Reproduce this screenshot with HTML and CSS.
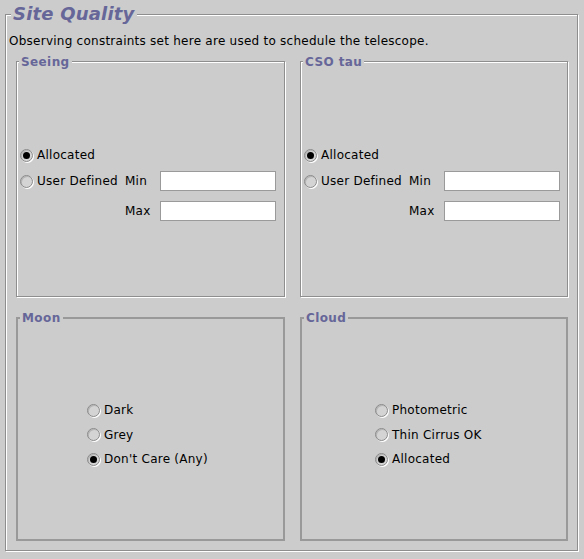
FILE: index.html
```html
<!DOCTYPE html>
<html>
<head>
<meta charset="utf-8">
<link rel="stylesheet" href="styles.css">
</head>
<body>
<div class="panel">
  <span class="panel-title">Site Quality</span>
  <p class="desc">Observing constraints set here are used to schedule the telescope.</p>
  <div class="grid">
    <div class="box etched">
      <span class="box-title">Seeing</span>
      <div class="form">
        <label class="opt"><span class="radio on"></span>Allocated</label>
        <span></span><span></span>
        <label class="opt"><span class="radio"></span>User Defined</label>
        <span class="lbl">Min</span><span class="field"></span>
        <span></span>
        <span class="lbl">Max</span><span class="field"></span>
      </div>
    </div>
    <div class="box etched right">
      <span class="box-title">CSO tau</span>
      <div class="form">
        <label class="opt"><span class="radio on"></span>Allocated</label>
        <span></span><span></span>
        <label class="opt"><span class="radio"></span>User Defined</label>
        <span class="lbl">Min</span><span class="field"></span>
        <span></span>
        <span class="lbl">Max</span><span class="field"></span>
      </div>
    </div>
    <div class="box lined moon">
      <span class="box-title">Moon</span>
      <div class="list">
        <label class="opt"><span class="radio"></span>Dark</label>
        <label class="opt"><span class="radio"></span>Grey</label>
        <label class="opt"><span class="radio on"></span>Don't Care (Any)</label>
      </div>
    </div>
    <div class="box lined cloud">
      <span class="box-title">Cloud</span>
      <div class="list">
        <label class="opt"><span class="radio"></span>Photometric</label>
        <label class="opt"><span class="radio"></span>Thin Cirrus OK</label>
        <label class="opt"><span class="radio on"></span>Allocated</label>
      </div>
    </div>
  </div>
</div>
</body>
</html>
```
FILE: styles.css
```css
html, body {
  margin: 0;
  padding: 0;
  background: #cccccc;
  width: 584px;
  height: 559px;
  overflow: hidden;
  font-family: "DejaVu Sans", sans-serif;
  font-size: 12px;
  letter-spacing: 0.25px;
  color: #000;
}
.panel {
  position: relative;
  box-sizing: border-box;
  margin: 14px 0 0 5px;
  width: 573px;
  height: 537px;
  border: 1px solid #8e8e8e;
  box-shadow: 1px 1px 0 #fff, inset 1px 1px 0 #fff;
  padding: 19px 0 0 3px;
}
.panel-title {
  position: absolute;
  top: -12px;
  left: 5px;
  padding: 0 2px;
  background: #cccccc;
  color: #666699;
  font-size: 18px;
  line-height: 21px;
  font-weight: bold;
  font-style: italic;
  letter-spacing: 0.2px;
}
.desc {
  margin: 0;
  line-height: 14px;
  height: 14px;
  white-space: nowrap;
}
.grid {
  display: grid;
  grid-template-columns: 269px 268px;
  grid-template-rows: 236px 224px;
  column-gap: 15px;
  row-gap: 20px;
  margin: 13px 0 0 7px;
}
.box {
  position: relative;
  box-sizing: border-box;
}
.etched {
  border: 1px solid #8e8e8e;
  box-shadow: 1px 1px 0 #fff, inset 1px 1px 0 #fff;
  padding: 83px 0 0 3px;
}
.lined {
  border: 2px solid #999999;
}
.box-title {
  position: absolute;
  top: -7px;
  left: 2px;
  padding: 0 2px;
  background: #cccccc;
  color: #666699;
  font-weight: bold;
  line-height: 14px;
  letter-spacing: 0.4px;
}
.lined .box-title {
  top: -8px;
  left: 2px;
}
.form {
  display: grid;
  grid-template-columns: 105px 35px 116px;
  grid-template-rows: 20px 26px 30px;
  align-items: end;
}
.lbl {
  line-height: 20px;
  height: 20px;
}
.field {
  box-sizing: border-box;
  width: 116px;
  height: 20px;
  background: #fff;
  border: 1px solid #9a9a9a;
}
.opt {
  display: flex;
  align-items: center;
  white-space: nowrap;
  line-height: 14px;
  height: 20px;
}
.radio {
  flex: none;
  width: 13px;
  height: 13px;
  margin-right: 4px;
  box-sizing: border-box;
  border-radius: 50%;
  border: 1px solid #8a8a8a;
  box-shadow: 1px 1px 0 #fff, inset 1px 1px 0 #b4b4b4;
  background: #d4d4d4;
  position: relative;
}
.radio.on::after {
  content: "";
  position: absolute;
  left: 2px;
  top: 2px;
  width: 7px;
  height: 7px;
  border-radius: 50%;
  background: #000;
}
.list {
  display: flex;
  flex-direction: column;
}
.list .opt { height: 24.5px; }
.moon .list { padding: 79px 0 0 69px; }
.cloud .list { padding: 79px 0 0 73px; }
```
